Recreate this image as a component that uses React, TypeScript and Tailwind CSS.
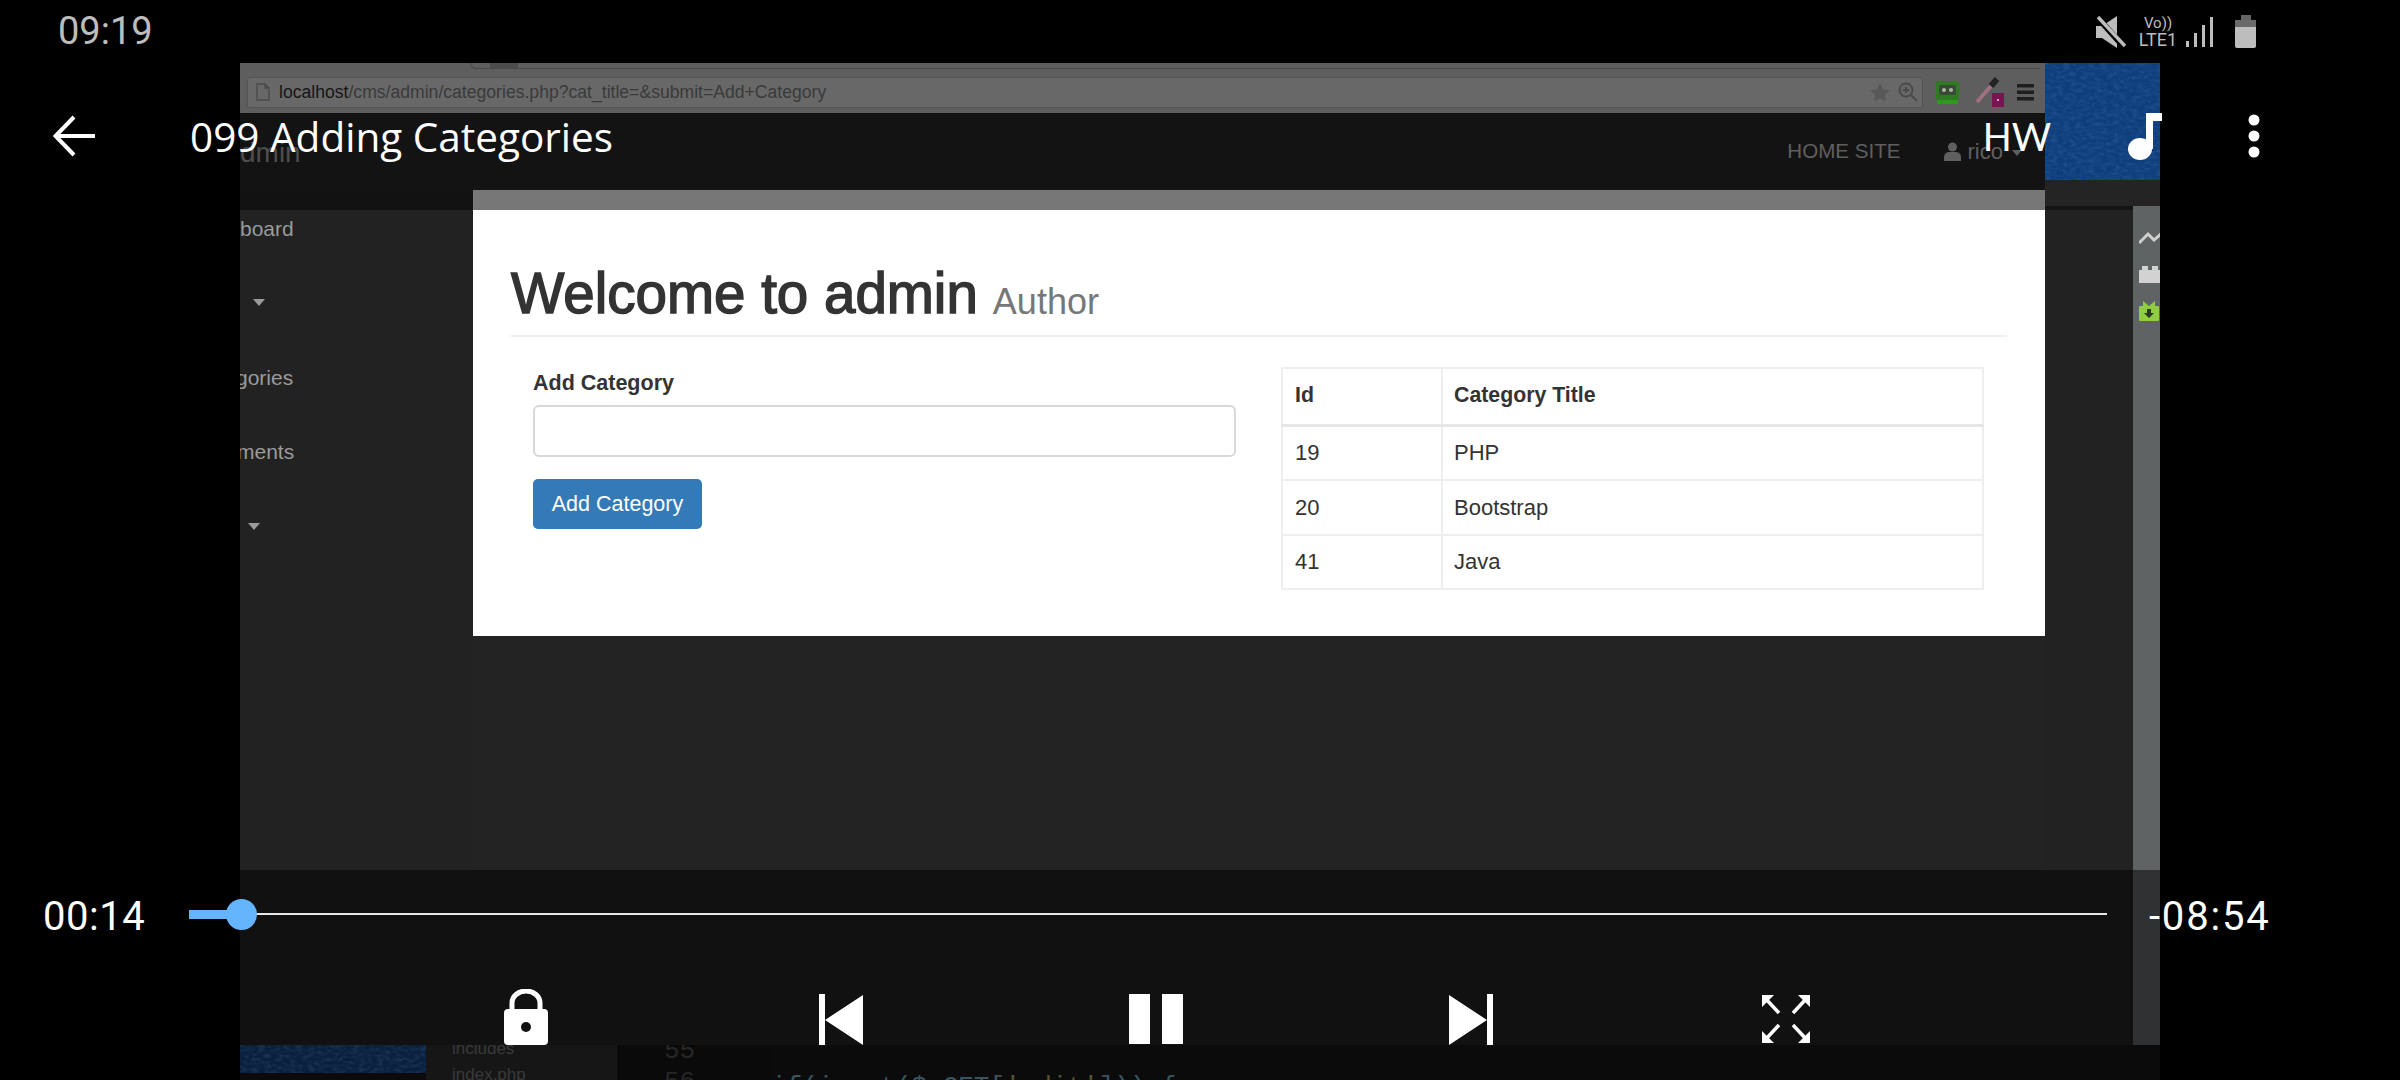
const sideItems = [
  { label: 'board', arrow: false, shift: '' },
  { label: '', arrow: 'pl-[13px]', shift: '' },
  { label: 'gories', arrow: false, shift: '-ml-[4px]' },
  { label: 'ments', arrow: false, shift: '-ml-[3px]' },
  { label: '', arrow: 'pl-[8px]', shift: '' },
];

const rows = [
  ['19', 'PHP'],
  ['20', 'Bootstrap'],
  ['41', 'Java'],
];

function Leather({ id, color, className }: { id: string; color: string; className: string }) {
  return (
    <svg className={className} preserveAspectRatio="none">
      <filter id={id}>
        <feTurbulence type="fractalNoise" baseFrequency="0.16 0.3" numOctaves="3" seed="4" />
        <feColorMatrix values="0 0 0 0 0.4  0 0 0 0 0.55  0 0 0 0 0.85  1.6 0 0 0 -0.62" />
      </filter>
      <rect width="100%" height="100%" fill={color} />
      <rect width="100%" height="100%" filter={`url(#${id})`} opacity="0.16" />
    </svg>
  );
}

function StatusIcons() {
  return (
    <div className="flex items-center text-[#bdbdbd]">
      <svg width="30" height="32" viewBox="0 0 30 32" fill="#bdbdbd">
        <path d="M0 10h6L21 0v32L6 22H0z" />
        <path d="M2 2l26 29" stroke="#000" strokeWidth="6" />
        <path d="M2 1l27 29" stroke="#bdbdbd" strokeWidth="3.5" />
      </svg>
      <div className="ml-[11px] flex w-[42px] flex-col items-center text-center leading-none font-['Roboto',sans-serif]">
        <span className="text-[15px] leading-[16px]">Vo))</span>
        <span className="text-[18px] leading-[17px]">LTE1</span>
      </div>
      <svg className="ml-[7px]" width="28" height="32" viewBox="0 0 28 32" fill="#bdbdbd">
        <rect x="0" y="25" width="3" height="6" />
        <rect x="8" y="17" width="3" height="14" />
        <rect x="16" y="9" width="3" height="22" />
        <rect x="24" y="1" width="3" height="30" />
      </svg>
      <svg className="ml-[21px]" width="22" height="33" viewBox="0 0 22 33">
        <rect x="6" y="0" width="10" height="6" fill="#666" />
        <rect x="0" y="5" width="21" height="8" fill="#6a6a6a" />
        <path d="M0 12h21v19a2 2 0 0 1-2 2H2a2 2 0 0 1-2-2z" fill="#bdbdbd" />
      </svg>
    </div>
  );
}

function BrowserBar() {
  return (
    <div className="relative flex h-[50px] items-center bg-[#5e5e5e] pt-[8px] pl-[7px]">
      <div className="absolute top-0 left-[230px] h-[6px] w-[1570px] rounded-bl-md border-b border-l border-[#4a4a4a]" />
      <div className="absolute top-0 left-[250px] h-[5px] w-[28px] bg-[#4c4c4c]" />
      <div className="flex h-[31px] w-[1676px] items-center rounded-[3px] border border-[#535353] bg-[#686868] pl-[8px]">
        <svg width="14" height="18" viewBox="0 0 14 18" fill="none" stroke="#4a4a4a" strokeWidth="1.4">
          <path d="M1 1h8l4 4v12H1zM9 1v4h4" />
        </svg>
        <span className="ml-[9px] text-[17.6px] text-[#3a3a3a]">
          <span className="text-[#161616]">localhost</span>/cms/admin/categories.php?cat_title=&amp;submit=Add+Category
        </span>
        <svg className="ml-auto" width="20" height="19" viewBox="0 0 24 23" fill="#585858">
          <path d="M12 0l3.5 8 8.5.8-6.4 5.6 2 8.6L12 18.400 4.400 23l2-8.600L0 8.800 8.500 8z" />
        </svg>
        <svg className="mr-[4px] ml-[8px]" width="20" height="20" viewBox="0 0 20 20" fill="none" stroke="#4a4a4a" strokeWidth="2">
          <circle cx="8" cy="8" r="6.500" />
          <path d="M13 13l6 6M5 8h6M8 5v6" />
        </svg>
      </div>
      <svg className="ml-[13px]" width="23" height="24" viewBox="0 0 23 24">
        <rect x="0" y="1" width="23" height="19" rx="3" fill="#2f7a22" />
        <rect x="3" y="5" width="17" height="10" rx="2" fill="#3a4a36" />
        <circle cx="8" cy="10" r="2" fill="#a8b8a0" />
        <circle cx="15" cy="10" r="2" fill="#a8b8a0" />
        <rect x="1" y="20" width="21" height="4" rx="1" fill="#2c9a1c" />
      </svg>
      <svg className="ml-[16px]" width="30" height="30" viewBox="0 0 30 30">
        <path d="M2 25L16 9" stroke="#a07080" strokeWidth="4" />
        <path d="M16 9l6-7" stroke="#222" strokeWidth="6" />
        <rect x="17" y="16" width="12" height="14" rx="1" fill="#7a1450" />
        <rect x="22" y="22" width="2" height="2" fill="#c8a0c0" />
      </svg>
      <svg className="ml-[12px]" width="17" height="18" viewBox="0 0 17 18" fill="#1e1e1e">
        <rect width="17" height="3.500" y="1" />
        <rect width="17" height="3.500" y="7.500" />
        <rect width="17" height="3.500" y="14" />
      </svg>
    </div>
  );
}

function NavBar() {
  return (
    <div className="flex h-[77px] items-center bg-[#131313] pr-[23px] text-[#5f5f5f]">
      <span className="mt-[2px] text-[28px] text-[#4d4d4d]">dmin</span>
      <span className="ml-auto text-[20.6px]">HOME SITE</span>
      <svg className="ml-[43px]" width="17" height="19" viewBox="0 0 17 19" fill="#5f5f5f">
        <circle cx="8.500" cy="5" r="4.500" />
        <path d="M0 19v-4a5 5 0 0 1 5-5h7a5 5 0 0 1 5 5v4z" />
      </svg>
      <span className="ml-[7px] text-[22px]">rico</span>
      <span className="mt-[2px] ml-[9px] h-0 w-0 border-x-[5px] border-t-[6px] border-x-transparent border-t-[#5f5f5f]" />
    </div>
  );
}

function Sidebar() {
  return (
    <div className="w-[233px] shrink-0 overflow-hidden bg-[#222222]">
      <div className="h-[20px] bg-[#121212]" />
      <div className="-mt-[19px]">
        {sideItems.map((item, i) => (
          <div key={i} className={`flex h-[74.500px] items-center text-[21px] text-[#9a9a9a] ${item.shift}`}>
            {item.arrow ? (
              <span className={item.arrow}>
                <span className="block h-0 w-0 border-x-[6px] border-t-[7px] border-x-transparent border-t-[#9a9a9a]" />
              </span>
            ) : (
              item.label
            )}
          </div>
        ))}
      </div>
    </div>
  );
}

function AdminPanel() {
  return (
    <div className="flex min-w-0 flex-1 flex-col">
      <div className="h-[20px] bg-[#777777]" />
      <div className="h-[426px] bg-white px-[38px] text-[#333333]">
        <div className="flex h-[127px] items-end border-b-2 border-[#eeeeee] pb-[9px]">
          <h1 className="text-[56.5px] leading-[64px] [-webkit-text-stroke:1.5px_#333333]">Welcome to admin</h1>
          <span className="mb-[2px] ml-[15px] text-[36px] leading-[44px] text-[#777777]">Author</span>
        </div>
        <div className="flex pl-[22px]">
          <div className="w-[703px] pt-[34px]">
            <label className="block text-[21.5px] leading-[24px] font-bold">Add Category</label>
            <div className="mt-[10px] h-[52px] rounded-[6px] border-2 border-[#d8d8d8]" />
            <button className="mt-[22px] h-[50px] w-[169px] rounded-[5px] bg-[#337ab7] text-[21.5px] text-white">
              Add Category
            </button>
          </div>
          <table className="mt-[30px] ml-[45px] h-[223px] w-[703px] table-fixed border-collapse self-start border-2 border-[#eeeeee] text-[22px]">
            <colgroup>
              <col className="w-[160px]" />
              <col />
            </colgroup>
            <thead>
              <tr className="h-[57px] border-b-[3px] border-[#e6e6e6] text-[21.3px]">
                <th className="border-r-2 border-[#eeeeee] pl-[12px] text-left font-bold">Id</th>
                <th className="pl-[11px] text-left font-bold">Category Title</th>
              </tr>
            </thead>
            <tbody>
              {rows.map(([id, title]) => (
                <tr key={id} className="border-b-2 border-[#eeeeee]">
                  <td className="border-r-2 border-[#eeeeee] pl-[12px]">{id}</td>
                  <td className="pl-[11px]">{title}</td>
                </tr>
              ))}
            </tbody>
          </table>
        </div>
      </div>
      <div className="flex-1 bg-[#232323]" />
    </div>
  );
}

function RightColumn() {
  return (
    <div className="flex w-[115px] shrink-0 flex-col overflow-hidden">
      <Leather id="leather-top" color="#0e3f7c" className="h-[117px] w-full shrink-0" />
      <div className="h-[26px] shrink-0 bg-[#242424]" />
      <div className="flex flex-1">
        <div className="w-[88px] bg-[#222222]">
          <div className="h-[4px] bg-[#151515]" />
        </div>
        <div className="flex-1 overflow-hidden bg-[#606364] pl-[6px]">
          <svg className="mt-[22px]" width="24" height="18" viewBox="0 0 24 18" fill="none" stroke="#cfcfcf" strokeWidth="3">
            <path d="M0 15l9-9 6 6 9-8" />
          </svg>
          <svg className="mt-[19px]" width="24" height="18" viewBox="0 0 24 18" fill="#d2d2d2">
            <path d="M0 5h3V1h6v4h4V1h6v4h5v13H0z" />
          </svg>
          <svg className="mt-[18px]" width="20" height="20" viewBox="0 0 20 20">
            <rect x="0" y="5" width="20" height="15" rx="1" fill="#8fce3f" />
            <path d="M4 0l6 5 6-5v5H4z" fill="#8fce3f" />
            <path d="M8 8h4v4h3l-5 5-5-5h3z" fill="#2b3a1e" />
          </svg>
        </div>
      </div>
    </div>
  );
}

function BottomStrip() {
  return (
    <div className="flex h-[35px] shrink-0 overflow-hidden bg-[#0b0b0b]">
      <Leather id="leather-bottom" color="#09213e" className="h-[28px] w-[186px] shrink-0" />
      <div className="w-[191px] shrink-0 bg-[#161616] pl-[26px] text-[17px] leading-[26px] text-[#3a3a3a]">
        <div className="-mt-[9px]">includes</div>
        <div>index.php</div>
      </div>
      <div className="flex flex-1 font-['Liberation_Mono',monospace] text-[26px] leading-[31px]">
        <div className="w-[154px] shrink-0 bg-[#0a0a0a] pl-[47px] text-[#262626]">
          <div className="-mt-[9px]">55</div>
          <div>56</div>
        </div>
        <div className="pt-[27px] text-[#3a5560]">
          if(isset($_GET[<span className="text-[#55532f]">'edit'</span>])) {'{'}
        </div>
      </div>
    </div>
  );
}

function TopControls() {
  return (
    <div className="absolute top-[113px] right-0 left-0 flex h-[46px] items-center text-white">
      <svg className="ml-[53px]" width="42" height="42" viewBox="0 0 42 42" fill="none" stroke="#fff" strokeWidth="4">
        <path d="M2 21h40M21 2L2.500 21 21 40" />
      </svg>
      <span className="mt-[2px] ml-[95px] font-['Open_Sans',sans-serif] text-[40.500px] leading-[46px]">099 Adding Categories</span>
      <span className="ml-auto font-['Lato',sans-serif] text-[38px] leading-[46px]">HW</span>
      <svg className="ml-[77px]" width="34" height="47" viewBox="0 0 34 47" fill="#fff">
        <ellipse cx="12" cy="36" rx="12" ry="11" />
        <rect x="18" y="0" width="7" height="36" />
        <rect x="18" y="0" width="16" height="8" />
      </svg>
      <svg className="mr-[140px] ml-[86px]" width="12" height="44" viewBox="0 0 12 44" fill="#fff">
        <circle cx="6" cy="6" r="5.500" />
        <circle cx="6" cy="22" r="5.500" />
        <circle cx="6" cy="38" r="5.500" />
      </svg>
    </div>
  );
}

function ExpandIcon() {
  return (
    <svg width="48" height="48" viewBox="0 0 48 48" fill="#fff" stroke="#fff">
      <g strokeWidth="3.500">
        <path d="M3 3l14 15M45 3L31 18M3 45l14-15M45 45L31 30" />
      </g>
      <g stroke="none">
        <path d="M0 0h12L0 12zM48 0H36l12 12zM0 48h12L0 36zM48 48H36l12-12z" />
      </g>
    </svg>
  );
}

function BottomControls() {
  return (
    <div className="absolute top-[870px] right-0 left-0 h-[175px] text-white">
      <div className="absolute inset-y-0 right-[240px] left-[240px] bg-black/50" />
      <div className="relative flex h-[88px] items-center font-['Roboto',sans-serif] text-[40px]">
        <span className="mt-[6px] ml-[43px] w-[146px] tracking-[0.5px]">00:14</span>
        <div className="relative h-[2px] w-[1918px] bg-[#e8e8e8]">
          <div className="absolute top-[-3.500px] left-0 h-[9px] w-[52px] bg-[#64b5fd]" />
          <div className="absolute top-[-14.500px] left-[37px] h-[31px] w-[31px] rounded-full bg-[#64b5fd]" />
        </div>
        <span className="mt-[6px] ml-[42px] tracking-[1.8px]">-08:54</span>
      </div>
      <div className="relative flex h-[87px] items-end pl-[368px]">
        <div className="flex w-[315px] justify-center">
          <svg width="44" height="56" viewBox="0 0 44 56">
            <path d="M8 24V14a14 12 0 0 1 28 0v10" fill="none" stroke="#fff" strokeWidth="5" />
            <rect x="0" y="20" width="44" height="36" rx="4" fill="#fff" />
            <circle cx="22" cy="38" r="5" fill="#111" />
          </svg>
        </div>
        <div className="flex w-[315px] justify-center">
          <svg width="44" height="51" viewBox="0 0 44 51" fill="#fff">
            <rect width="6" height="51" />
            <path d="M44 1v50L6 26z" />
          </svg>
        </div>
        <div className="flex w-[315px] justify-center gap-[12px]">
          <div className="mb-[1px] h-[50px] w-[21px] bg-white" />
          <div className="mb-[1px] h-[50px] w-[21px] bg-white" />
        </div>
        <div className="flex w-[315px] justify-center">
          <svg width="44" height="51" viewBox="0 0 44 51" fill="#fff">
            <rect x="38" width="6" height="51" />
            <path d="M0 1v50l38-25z" />
          </svg>
        </div>
        <div className="mb-[2px] flex w-[315px] justify-center">
          <ExpandIcon />
        </div>
      </div>
    </div>
  );
}

export default function App() {
  return (
    <div className="relative h-[1080px] w-[2400px] overflow-hidden bg-black font-['Liberation_Sans',sans-serif]">
      <div className="flex h-[63px] items-center justify-between pr-[143px] pl-[58px]">
        <span className="font-['Roboto',sans-serif] text-[38px] text-[#bdbdbd]">09:19</span>
        <StatusIcons />
      </div>

      <div className="ml-[240px] flex h-[1017px] w-[1920px] flex-col">
        <div className="flex min-h-0 flex-1">
          <div className="flex min-w-0 flex-1 flex-col">
            <BrowserBar />
            <NavBar />
            <div className="flex min-h-0 flex-1">
              <Sidebar />
              <AdminPanel />
            </div>
          </div>
          <RightColumn />
        </div>
        <BottomStrip />
      </div>

      <TopControls />
      <BottomControls />
    </div>
  );
}
